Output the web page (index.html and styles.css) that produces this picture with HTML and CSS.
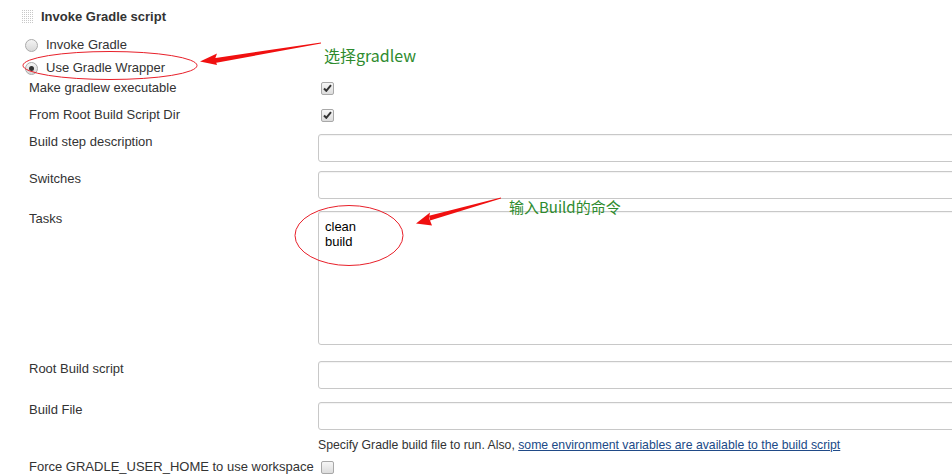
FILE: index.html
```html
<!DOCTYPE html>
<html>
<head>
<meta charset="utf-8">
<link rel="stylesheet" href="styles.css">
</head>
<body>
<div class="page">
  <div class="header">
    <svg class="grip" width="11" height="13" viewBox="0 0 11 13">
      <defs><pattern id="dots" width="2" height="2" patternUnits="userSpaceOnUse"><rect width="1" height="1" fill="#c8c8c8"/></pattern></defs>
      <rect width="11" height="13" fill="url(#dots)"/>
    </svg>
    <span class="title">Invoke Gradle script</span>
  </div>

  <div class="radio-row r1"><span class="radio"></span><span>Invoke Gradle</span></div>
  <div class="radio-row r2"><span class="radio checked"></span><span>Use Gradle Wrapper</span></div>

  <div class="row m4 h16"><div class="label">Make gradlew executable</div><div class="ctrl"><span class="cb checked"><svg width="9" height="8" viewBox="0 0 9 8"><path d="M1 4.5 L3.3 6.8 L8 1.2" fill="none" stroke="#333" stroke-width="2"/></svg></span></div></div>
  <div class="row m11 h16"><div class="label">From Root Build Script Dir</div><div class="ctrl"><span class="cb checked"><svg width="9" height="8" viewBox="0 0 9 8"><path d="M1 4.5 L3.3 6.8 L8 1.2" fill="none" stroke="#333" stroke-width="2"/></svg></span></div></div>

  <div class="row m11"><div class="label">Build step description</div><div class="ctrl"><div class="input"></div></div></div>
  <div class="row m9"><div class="label">Switches</div><div class="ctrl"><div class="input"></div></div></div>
  <div class="row m12"><div class="label">Tasks</div><div class="ctrl"><div class="input textarea">clean<br>build</div></div></div>
  <div class="row m16"><div class="label">Root Build script</div><div class="ctrl"><div class="input"></div></div></div>
  <div class="row m13"><div class="label">Build File</div><div class="ctrl"><div class="input"></div></div></div>
  <div class="row m7 h16"><div class="label"></div><div class="help">Specify Gradle build file to run. Also, <a href="#">some environment variables are available to the build script</a></div></div>
  <div class="row m6 h16"><div class="label">Force GRADLE_USER_HOME to use workspace</div><div class="ctrl"><span class="cb"></span></div></div>

  <svg class="marks" width="952" height="475" viewBox="0 0 952 475">
    <ellipse cx="110" cy="65.5" rx="87" ry="14" fill="none" stroke="#e8202a" stroke-width="1"/>
    <polygon points="321,42.6 214,58.2 215,63 321,43.4" fill="#f01010"/>
    <polygon points="200,61.5 217,53.5 215,59 217,65" fill="#f01010"/>
    <ellipse cx="349" cy="235.5" rx="54" ry="30" fill="none" stroke="#e8202a" stroke-width="1"/>
    <polygon points="501,197.6 429,215.8 430,220.6 501,198.4" fill="#f01010"/>
    <polygon points="416,223.5 430,212.5 429,218 432,225.5" fill="#f01010"/>
  </svg>
  <div class="note n1">选择gradlew</div>
  <div class="note n2">输入Build的命令</div>
</div>
</body>
</html>
```

FILE: styles.css
```css
html, body {
  margin: 0;
  padding: 0;
  background: #fff;
  overflow: hidden;
}
body {
  font-family: "Liberation Sans", Arial, sans-serif;
  font-size: 13px;
  color: #333;
  width: 952px;
  height: 475px;
}
.page {
  position: relative;
  width: 952px;
  height: 475px;
}
.header {
  height: 32px;
  display: flex;
  align-items: center;
  padding-left: 22px;
}
.grip {
  display: block;
  margin-right: 8px;
}
.title {
  font-weight: bold;
  color: #333;
}
.radio-row {
  display: flex;
  align-items: center;
  height: 16px;
  padding-left: 25px;
  line-height: 16px;
}
.r1 { margin-top: 5px; }
.r2 { margin-top: 7px; }
.radio {
  width: 11px;
  height: 11px;
  border: 1px solid #aaa;
  border-radius: 50%;
  background: linear-gradient(#f4f4f4, #d8d8d8);
  margin-right: 8px;
  position: relative;
  flex: none;
}
.radio.checked::after {
  content: "";
  position: absolute;
  left: 3px;
  top: 3px;
  width: 5px;
  height: 5px;
  border-radius: 50%;
  background: #333;
}
.row {
  display: flex;
  line-height: 16px;
}
.h16 { height: 16px; }
.m4 { margin-top: 4px; }
.m6 { margin-top: 6px; }
.m7 { margin-top: 7px; }
.m9 { margin-top: 9px; }
.m11 { margin-top: 11px; }
.m12 { margin-top: 12px; }
.m13 { margin-top: 13px; }
.m16 { margin-top: 16px; }
.label {
  width: 318px;
  box-sizing: border-box;
  padding-left: 29px;
  flex: none;
  white-space: nowrap;
}
.ctrl {
  flex: none;
  display: flex;
  align-items: center;
}
.cb {
  display: inline-flex;
  align-items: center;
  justify-content: center;
  width: 11px;
  height: 11px;
  margin-left: 3px;
  border: 1px solid #a8a8a8;
  border-radius: 2px;
  background: linear-gradient(#f6f6f6, #dcdcdc);
}
.input {
  width: 700px;
  height: 28px;
  box-sizing: border-box;
  border: 1px solid #c8c8c8;
  border-radius: 3px;
  background: #fff;
  box-shadow: inset 0 1px 1px rgba(0,0,0,0.05);
}
.textarea {
  height: 134px;
  padding: 7px 6px;
  color: #000;
  line-height: 15px;
}
.help {
  flex: none;
  white-space: nowrap;
  color: #333;
  font-size: 12.25px;
}
.help a {
  color: #204a87;
  text-decoration: underline;
}
.marks {
  position: absolute;
  left: 0;
  top: 0;
  pointer-events: none;
}
.note {
  position: absolute;
  color: #2e8b2e;
  font-family: "Noto Sans CJK SC", "Liberation Sans", sans-serif;
  white-space: nowrap;
  line-height: 20px;
}
.n1 {
  left: 324px;
  top: 45px;
  font-size: 16px;
}
.n2 {
  left: 509px;
  top: 197px;
  font-size: 15px;
}
```
